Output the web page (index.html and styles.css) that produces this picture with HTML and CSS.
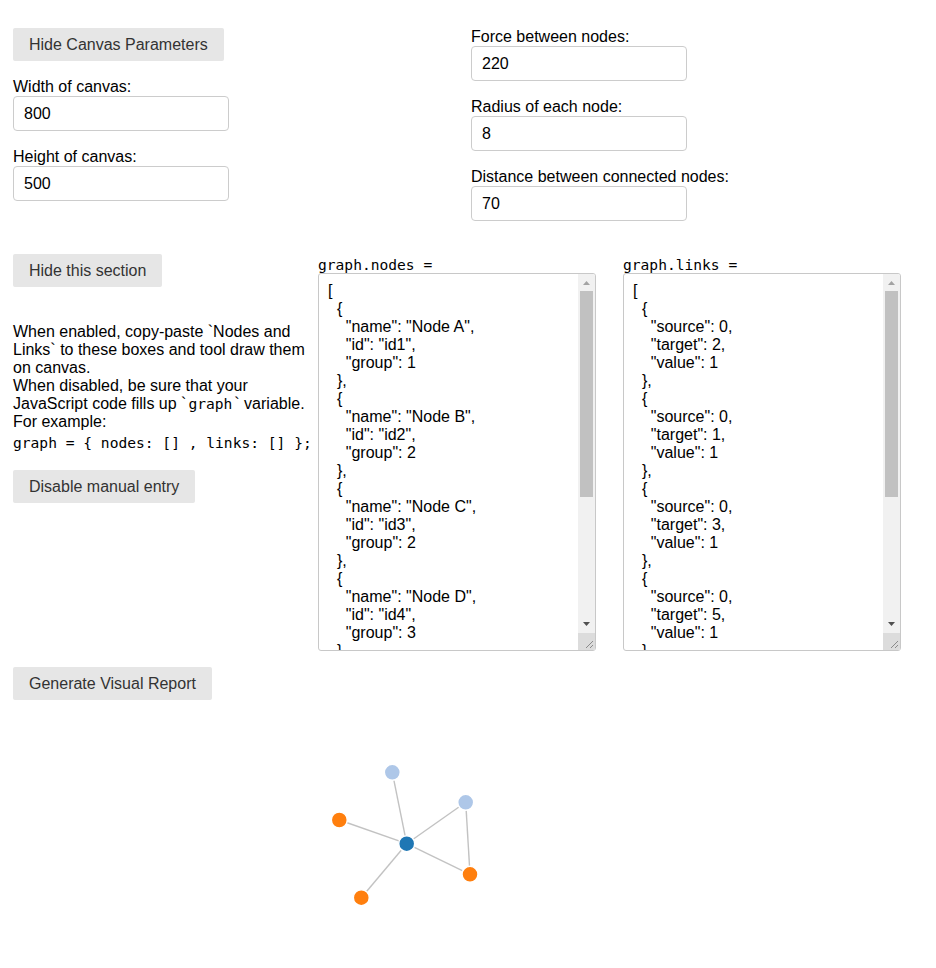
FILE: index.html
```html
<!DOCTYPE html>
<html lang="en">
<head>
<meta charset="utf-8">
<title>Graph tool</title>
<link rel="stylesheet" href="styles.css">
</head>
<body>
<div class="page">
  <section class="params">
    <div class="params-col">
      <button class="btn btn-params">Hide Canvas Parameters</button>
      <label class="field-label" for="w">Width of canvas:</label>
      <input class="field-input" id="w" type="text" value="800">
      <label class="field-label" for="h">Height of canvas:</label>
      <input class="field-input" id="h" type="text" value="500">
    </div>
    <div class="params-col">
      <label class="field-label" for="f">Force between nodes:</label>
      <input class="field-input" id="f" type="text" value="220">
      <label class="field-label" for="r">Radius of each node:</label>
      <input class="field-input" id="r" type="text" value="8">
      <label class="field-label" for="d">Distance between connected nodes:</label>
      <input class="field-input" id="d" type="text" value="70">
    </div>
  </section>

  <section class="entry">
    <div class="entry-side">
      <button class="btn">Hide this section</button>
      <p class="intro">When enabled, copy-paste `Nodes and Links` to these boxes and tool draw them on canvas.<br>When disabled, be sure that your JavaScript code fills up `<code class="mono">graph</code>` variable.<br>For example:</p>
      <code class="code-line">graph = { nodes: [] , links: [] };</code>
      <button class="btn btn-disable">Disable manual entry</button>
    </div>
    <div class="json-col">
      <label class="json-label" for="nodes">graph.nodes =</label>
      <div class="json-wrap">
        <textarea class="json-box" id="nodes" spellcheck="false">
[
  {
    "name": "Node A",
    "id": "id1",
    "group": 1
  },
  {
    "name": "Node B",
    "id": "id2",
    "group": 2
  },
  {
    "name": "Node C",
    "id": "id3",
    "group": 2
  },
  {
    "name": "Node D",
    "id": "id4",
    "group": 3
  },
  {
    "name": "Node E",
    "id": "id5",
    "group": 3
  },
  {
    "name": "Node F",
    "id": "id6",
    "group": 3
  }
]</textarea>
        <div class="vscroll" aria-hidden="true">
          <div class="vs-btn"><svg width="17" height="17" viewBox="0 0 17 17"><path class="arr-off" d="M5 11 L8.5 7 L12 11 Z"/></svg></div>
          <div class="vs-track"><div class="vs-thumb"></div></div>
          <div class="vs-btn"><svg width="17" height="17" viewBox="0 0 17 17"><path class="arr-on" d="M5 6 L12 6 L8.5 10 Z"/></svg></div>
          <div class="vs-corner"><svg width="17" height="17" viewBox="0 0 17 17"><path d="M8 15 L15 8 M12 15 L15 12"/></svg></div>
        </div>
      </div>
    </div>
    <div class="json-col json-col-links">
      <label class="json-label" for="links">graph.links =</label>
      <div class="json-wrap">
        <textarea class="json-box" id="links" spellcheck="false">
[
  {
    "source": 0,
    "target": 2,
    "value": 1
  },
  {
    "source": 0,
    "target": 1,
    "value": 1
  },
  {
    "source": 0,
    "target": 3,
    "value": 1
  },
  {
    "source": 0,
    "target": 5,
    "value": 1
  },
  {
    "source": 0,
    "target": 4,
    "value": 1
  },
  {
    "source": 2,
    "target": 3,
    "value": 1
  }
]</textarea>
        <div class="vscroll" aria-hidden="true">
          <div class="vs-btn"><svg width="17" height="17" viewBox="0 0 17 17"><path class="arr-off" d="M5 11 L8.5 7 L12 11 Z"/></svg></div>
          <div class="vs-track"><div class="vs-thumb"></div></div>
          <div class="vs-btn"><svg width="17" height="17" viewBox="0 0 17 17"><path class="arr-on" d="M5 6 L12 6 L8.5 10 Z"/></svg></div>
          <div class="vs-corner"><svg width="17" height="17" viewBox="0 0 17 17"><path d="M8 15 L15 8 M12 15 L15 12"/></svg></div>
        </div>
      </div>
    </div>
  </section>

  <section class="report">
    <button class="btn">Generate Visual Report</button>
    <svg class="graph" width="800" height="240" viewBox="0 0 800 240">
      <g class="links">
        <line x1="393.7" y1="127.7" x2="379.3" y2="56.3"/>
        <line x1="393.7" y1="127.7" x2="452.7" y2="86.3"/>
        <line x1="393.7" y1="127.7" x2="326.3" y2="104"/>
        <line x1="393.7" y1="127.7" x2="457" y2="158.3"/>
        <line x1="393.7" y1="127.7" x2="348.3" y2="181.7"/>
        <line x1="452.7" y1="86.3" x2="457" y2="158.3"/>
      </g>
      <g class="nodes">
        <circle class="g1" cx="393.7" cy="127.7" r="8"/>
        <circle class="g2" cx="379.3" cy="56.3" r="8"/>
        <circle class="g2" cx="452.7" cy="86.3" r="8"/>
        <circle class="g3" cx="326.3" cy="104" r="8"/>
        <circle class="g3" cx="457" cy="158.3" r="8"/>
        <circle class="g3" cx="348.3" cy="181.7" r="8"/>
      </g>
    </svg>
  </section>
</div>
</body>
</html>
```
FILE: styles.css
```css
* {
  box-sizing: border-box;
}

body {
  margin: 0;
  font-family: "Liberation Sans", Arial, sans-serif;
  font-size: 16px;
  color: #000;
  background: #fff;
}

.page {
  padding: 27px 13px 0;
}

.btn {
  display: block;
  font-family: "Liberation Sans", Arial, sans-serif;
  font-size: 16px;
  line-height: 19px;
  height: 33px;
  padding: 7px 16px;
  color: #333;
  background: #e6e6e6;
  border: none;
  border-radius: 2px;
  cursor: pointer;
}

/* canvas parameters */
.params {
  display: flex;
  align-items: flex-start;
}

.params-col {
  width: 458px;
  flex: none;
  display: flex;
  flex-direction: column;
  align-items: flex-start;
}

.params-col + .params-col {
  flex: 1;
  width: auto;
}

.btn-params {
  margin-top: 1px;
  margin-bottom: 16px;
}

.field-label {
  display: block;
  line-height: 19px;
}

.field-input {
  display: block;
  width: 216px;
  height: 35px;
  margin: 0 0 16px;
  padding: 0 10px;
  font-family: "Liberation Sans", Arial, sans-serif;
  font-size: 16px;
  color: #000;
  border: 1px solid #ccc;
  border-radius: 4px;
  background: #fff;
}

/* manual entry */
.entry {
  display: flex;
  align-items: flex-start;
  margin-top: 17px;
}

.entry-side {
  width: 305px;
  flex: none;
}

.intro {
  width: 310px;
  margin: 36px 0 0;
  line-height: 18px;
}

.mono {
  font-family: "DejaVu Sans Mono", monospace;
  font-size: 14.6px;
  line-height: 1;
  margin: 0 2px;
}

.code-line {
  display: block;
  margin-top: 3px;
  font-family: "DejaVu Sans Mono", monospace;
  font-size: 14.6px;
  line-height: 18px;
  white-space: pre;
}

.btn-disable {
  margin-top: 18px;
}

.json-col {
  width: 278px;
  flex: none;
}

.json-col-links {
  margin-left: 27px;
}

.json-label {
  display: block;
  margin-top: 3px;
  font-family: "DejaVu Sans Mono", monospace;
  font-size: 14.6px;
  line-height: 16px;
}

.json-wrap {
  position: relative;
  width: 278px;
  height: 378px;
}

.json-box {
  display: block;
  width: 278px;
  height: 378px;
  margin: 0;
  padding: 8px 26px 8px 9px;
  font-family: "Liberation Sans", Arial, sans-serif;
  font-size: 16px;
  line-height: 18px;
  color: #000;
  border: 1px solid #c8c8c8;
  border-radius: 3px;
  background: #fff;
  resize: none;
  overflow: hidden;
}

/* drawn scrollbar overlaying the textarea's right edge */
.vscroll {
  position: absolute;
  top: 1px;
  right: 1px;
  bottom: 1px;
  width: 17px;
  display: flex;
  flex-direction: column;
  background: #f1f1f1;
  border-radius: 0 2px 2px 0;
  overflow: hidden;
}

.vs-btn {
  height: 17px;
  flex: none;
}

.vs-btn svg,
.vs-corner svg {
  display: block;
}

.arr-off {
  fill: #a3a3a3;
}

.arr-on {
  fill: #505050;
}

.vs-track {
  flex: 1;
  padding: 0 2px;
}

.vs-thumb {
  height: 206px;
  background: #c1c1c1;
}

.vs-corner {
  height: 17px;
  flex: none;
  background: #dcdcdc;
}

.vs-corner path {
  stroke: #8a8a8a;
  stroke-width: 1;
  fill: none;
}

/* report */
.report {
  margin-top: 16px;
}

.graph {
  display: block;
  margin-top: 16px;
}

.links line {
  stroke: #999;
  stroke-opacity: 0.6;
  stroke-width: 1.4;
}

.nodes circle {
  stroke: #fff;
  stroke-width: 1.5;
}

.g1 { fill: #1f77b4; }
.g2 { fill: #aec7e8; }
.g3 { fill: #ff7f0e; }
```
